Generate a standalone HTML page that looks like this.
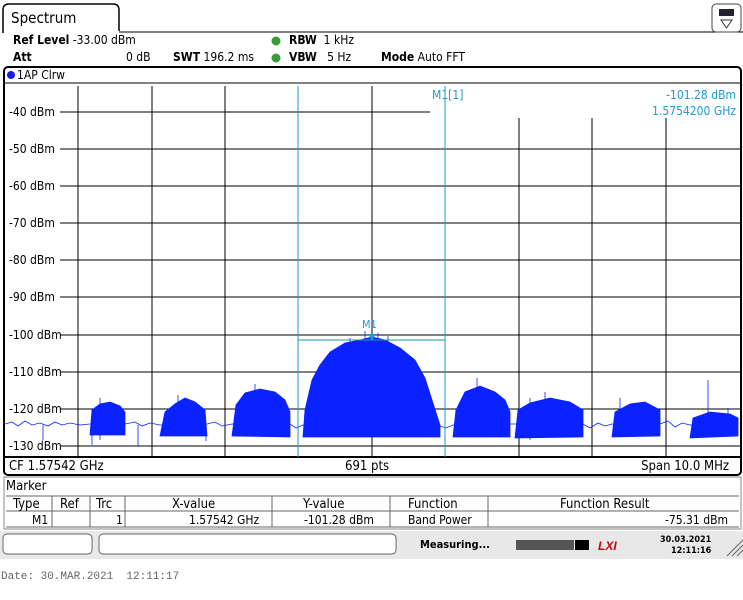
<!DOCTYPE html><html><head><style>
body{margin:0;width:743px;height:600px;background:#fff;font-family:"DejaVu Sans Condensed","Liberation Sans",sans-serif;font-size:12px;color:#000;position:relative;overflow:hidden}
.a{position:absolute;white-space:nowrap}
b{font-weight:bold}
</style></head><body>
<svg class="a" style="left:0;top:0" width="743" height="600">
<rect x="0" y="0" width="743" height="560" fill="#fff"/>
<path d="M3,33 V10 Q3,4 9,4 H113 Q119,4 119,10 V31" fill="none" stroke="#000" stroke-width="1.5"/>
<line x1="119" y1="32" x2="743" y2="32" stroke="#000" stroke-width="1"/>
<rect x="712" y="4" width="29" height="28" rx="4" fill="#fff" stroke="#444"/>
<rect x="719" y="9" width="15" height="7" fill="#223"/>
<path d="M721,20 L732,20 L726.5,28Z" fill="none" stroke="#333"/>
<circle cx="276" cy="41" r="4.5" fill="#3a9a3a"/><circle cx="276" cy="58" r="4.5" fill="#3a9a3a"/>
<rect x="4" y="67" width="737" height="408" rx="4" fill="#fff" stroke="#000" stroke-width="2"/>
<line x1="4" y1="83" x2="741" y2="83" stroke="#000"/>
<circle cx="11" cy="75" r="4" fill="#1a1ae0"/>
<g stroke="#000" stroke-width="1">
<line x1="78" y1="86" x2="78" y2="456"/><line x1="152" y1="86" x2="152" y2="456"/><line x1="225" y1="86" x2="225" y2="456"/><line x1="372" y1="86" x2="372" y2="456"/>
<line x1="519" y1="118" x2="519" y2="456"/><line x1="592" y1="118" x2="592" y2="456"/><line x1="666" y1="118" x2="666" y2="456"/>
<line x1="60" y1="112" x2="430" y2="112"/>
<line x1="60" y1="149" x2="741" y2="149"/><line x1="60" y1="186" x2="741" y2="186"/><line x1="60" y1="223" x2="741" y2="223"/><line x1="60" y1="260" x2="741" y2="260"/><line x1="60" y1="297" x2="741" y2="297"/><line x1="60" y1="335" x2="741" y2="335"/><line x1="60" y1="372" x2="741" y2="372"/><line x1="60" y1="409" x2="741" y2="409"/><line x1="60" y1="446" x2="741" y2="446"/>
</g>
<line x1="4" y1="457" x2="741" y2="457" stroke="#000" stroke-width="2"/>
<g fill="#0a22ff" stroke="#0a22ff" stroke-width="0.8">
<polyline fill="none" points="5,424 12,422 18,426 25,421 32,425 40,423 48,426 55,422 62,425 70,423 80,425 90,424 125,424 135,422 142,426 150,423 160,425 207,424 215,422 222,426 232,424 290,424 296,428 303,425 440,426 446,428 453,425 510,424 515,424 583,424 590,428 598,423 605,426 612,424 660,424 668,421 675,427 682,423 690,425 738,424"/>
<polygon points="90,435 92,410 100,404 110,402 120,406 125,412 125,435"/>
<polygon points="160,436 165,412 175,404 185,398 195,402 205,410 207,436"/>
<polygon points="232,436 236,405 245,393 260,389 275,392 285,400 290,412 290,437"/>
<polygon points="303,437 305,410 312,380 320,365 330,352 345,343 360,340 372,337 385,340 400,348 415,360 425,378 432,400 440,425 440,437"/>
<polygon points="453,437 456,410 465,392 480,386 495,392 505,400 510,412 510,437"/>
<polygon points="515,438 518,410 530,403 550,398 570,402 583,410 583,437"/>
<polygon points="612,437 615,412 630,404 645,402 660,410 660,436"/>
<polygon points="690,438 693,418 710,412 730,414 738,418 738,436"/>
<path fill="none" d="M708,380V426 M100,398V440 M138,425V446 M43,425V440 M178,395V432 M255,384V420 M350,338V360 M365,331V345 M378,333V345 M388,336V350 M477,378V400 M545,392V405 M620,398V420 M728,408V420 M92,420V445 M206,425V441 M530,398V440"/>
</g>
<line x1="298" y1="86" x2="298" y2="457" stroke="#1a9ad6"/><line x1="445" y1="86" x2="445" y2="457" stroke="#1a9ad6"/>
<line x1="298" y1="340" x2="445" y2="340" stroke="#1a9a9a"/>
<path d="M368,334 L376,334 L372,341Z" fill="#1a9ad6"/>
<rect x="4" y="477" width="737" height="52" fill="#fff" stroke="#888"/>
<g stroke="#666"><line x1="6" y1="511" x2="739" y2="511"/><line x1="6" y1="527" x2="739" y2="527"/>
<line x1="6" y1="496" x2="739" y2="496"/>
<line x1="52" y1="496" x2="52" y2="527"/><line x1="90" y1="496" x2="90" y2="527"/><line x1="125" y1="496" x2="125" y2="527"/><line x1="272" y1="496" x2="272" y2="527"/><line x1="390" y1="496" x2="390" y2="527"/><line x1="488" y1="496" x2="488" y2="527"/></g>
<rect x="0" y="531" width="743" height="28" fill="#e8e8e8"/>
<rect x="3" y="534" width="89" height="20" rx="4" fill="#fff" stroke="#666"/>
<rect x="99" y="534" width="297" height="20" rx="4" fill="#fff" stroke="#666"/>
<g fill="#555"><rect x="516" y="540" width="58" height="10"/><rect x="575" y="540" width="14" height="10" fill="#000"/></g>
<text x="598" y="550" fill="#c00" font-weight="bold" font-style="italic" font-size="12" font-family="Liberation Sans">LXI</text>
<path d="M727,556 L743,540 M732,556 L743,545 M737,556 L743,550" stroke="#666"/>
</svg>
<div class="a" style="left:11px;top:9px;font-size:15px">Spectrum</div>
<div class="a" style="left:13px;top:33px"><b>Ref Level</b> -33.00 dBm</div>
<div class="a" style="left:13px;top:50px"><b>Att</b></div>
<div class="a" style="left:126px;top:50px">0 dB</div>
<div class="a" style="left:173px;top:50px"><b>SWT</b> 196.2 ms</div>
<div class="a" style="left:289px;top:33px"><b>RBW</b>&nbsp; 1 kHz</div>
<div class="a" style="left:289px;top:50px"><b>VBW</b>&nbsp;&nbsp; 5 Hz</div>
<div class="a" style="left:381px;top:50px"><b>Mode</b> Auto FFT</div>
<div class="a" style="left:17px;top:68px">1AP Clrw</div>
<div class="a" style="left:9px;top:105px">-40 dBm</div>
<div class="a" style="left:9px;top:142px">-50 dBm</div>
<div class="a" style="left:9px;top:179px">-60 dBm</div>
<div class="a" style="left:9px;top:216px">-70 dBm</div>
<div class="a" style="left:9px;top:253px">-80 dBm</div>
<div class="a" style="left:9px;top:290px">-90 dBm</div>
<div class="a" style="left:9px;top:328px">-100 dBm</div>
<div class="a" style="left:9px;top:365px">-110 dBm</div>
<div class="a" style="left:9px;top:402px">-120 dBm</div>
<div class="a" style="left:9px;top:439px">-130 dBm</div>
<div class="a" style="left:432px;top:88px;color:#1a9ad6">M1[1]</div>
<div class="a" style="right:7px;top:88px;color:#1a9ad6">-101.28 dBm</div>
<div class="a" style="right:7px;top:104px;color:#1a9ad6">1.5754200 GHz</div>
<div class="a" style="left:362px;top:318px;color:#1a9ad6;font-size:11px">M1</div>
<div class="a" style="left:9px;top:459px;font-size:13px">CF 1.57542 GHz</div>
<div class="a" style="left:345px;top:459px;font-size:13px">691 pts</div>
<div class="a" style="right:14px;top:459px;font-size:13px">Span 10.0 MHz</div>
<div class="a" style="left:6px;top:479px;font-size:13px">Marker</div>
<div class="a" style="left:13px;top:497px;font-size:13px">Type</div>
<div class="a" style="left:60px;top:497px;font-size:13px">Ref</div>
<div class="a" style="left:96px;top:497px;font-size:13px">Trc</div>
<div class="a" style="left:172px;top:497px;font-size:13px">X-value</div>
<div class="a" style="left:303px;top:497px;font-size:13px">Y-value</div>
<div class="a" style="left:408px;top:497px;font-size:13px">Function</div>
<div class="a" style="left:560px;top:497px;font-size:13px">Function Result</div>
<div class="a" style="left:32px;top:513px">M1</div>
<div class="a" style="left:116px;top:513px">1</div>
<div class="a" style="left:189px;top:513px">1.57542 GHz</div>
<div class="a" style="left:304px;top:513px">-101.28 dBm</div>
<div class="a" style="left:408px;top:513px">Band Power</div>
<div class="a" style="right:15px;top:513px">-75.31 dBm</div>
<div class="a" style="left:420px;top:538px;font-weight:bold;font-size:11px">Measuring...</div>
<div class="a" style="left:660px;top:535px;font-weight:bold;font-size:9px;text-align:right;line-height:11px">30.03.2021<br>&nbsp;&nbsp;&nbsp;12:11:16</div>
<div class="a" style="left:1px;top:571px;font-family:'Liberation Mono',monospace;font-size:11px;color:#666">Date: 30.MAR.2021&nbsp; 12:11:17</div>
</body></html>
